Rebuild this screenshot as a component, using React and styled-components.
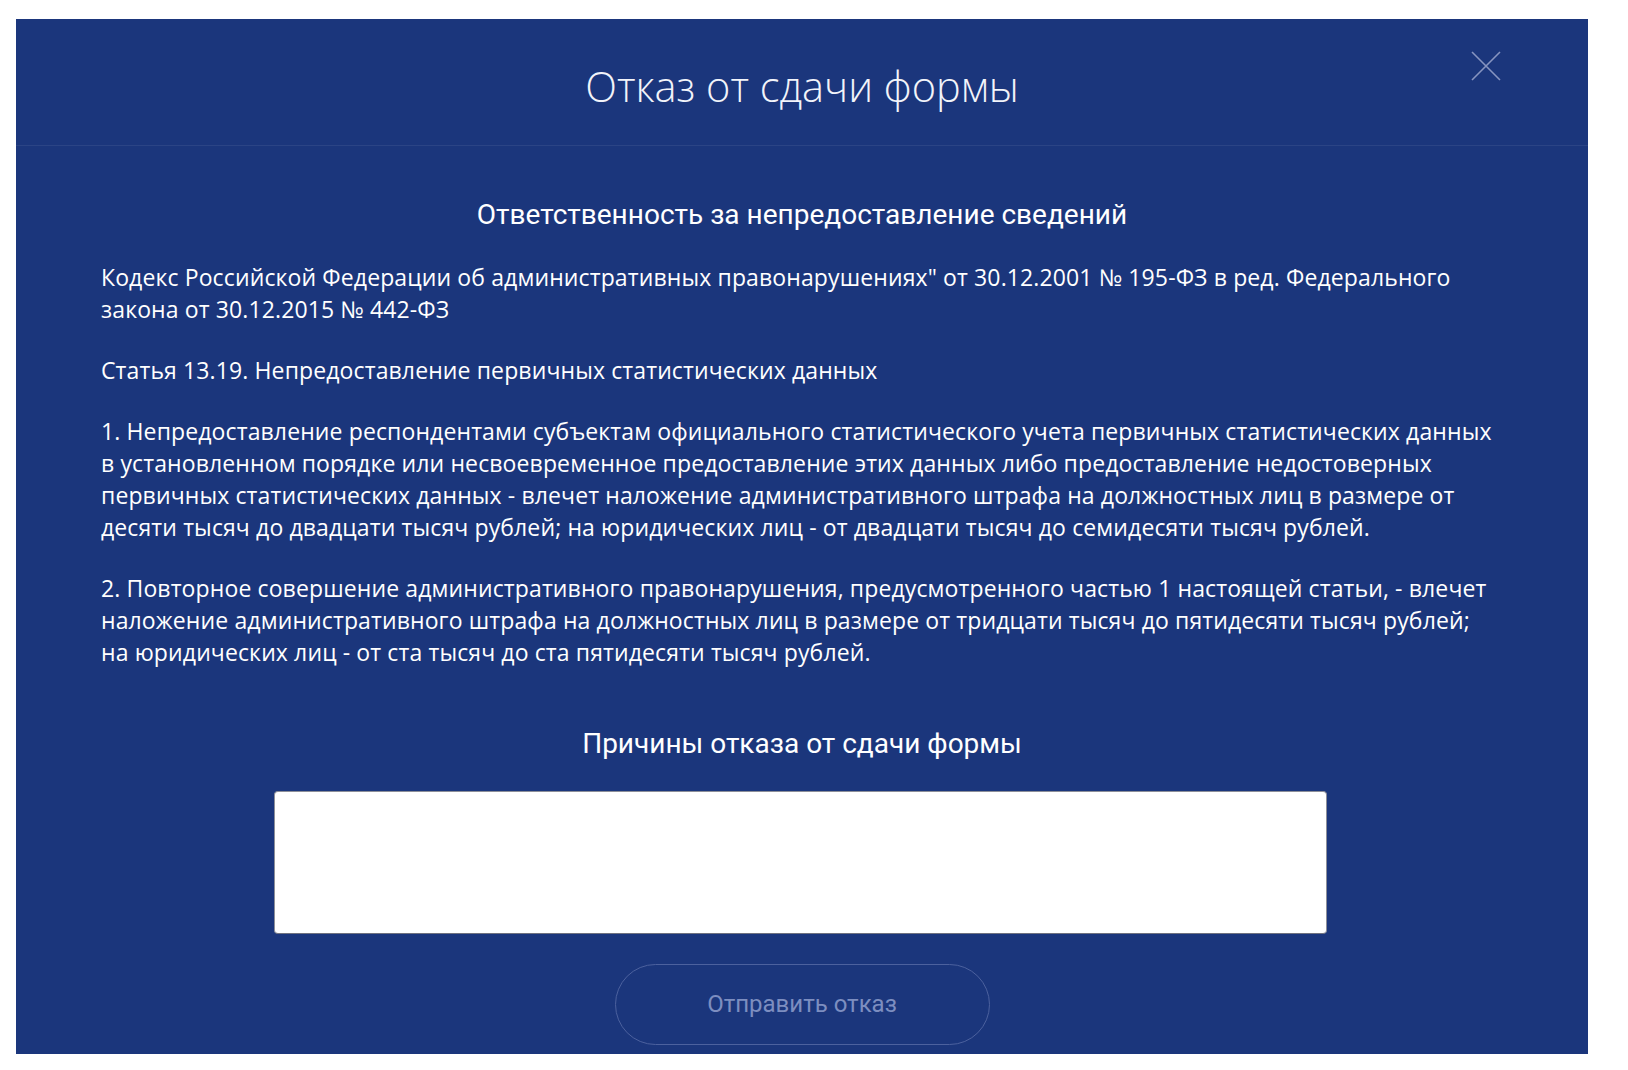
import React from 'react';
import styled, {createGlobalStyle} from 'styled-components';

const GlobalStyle = createGlobalStyle`
    body {
        margin: 0;
        background: #fff;
        font-family: "Open Sans", "Liberation Sans", sans-serif;
    }
`;

const Page = styled.div`
    padding: 19px 0 16px 16px;
`;

const Dialog = styled.div`
    width: 1572px;
    background: #1b367c;
    padding-bottom: 9px;
    color: #fff;
`;

const Header = styled.div`
    position: relative;
    height: 127px;
    box-sizing: border-box;
    padding-top: 47px;
    display: flex;
    justify-content: center;
    align-items: flex-start;
    border-bottom: 1px solid rgba(255, 255, 255, 0.07);
`;

const Title = styled.h1`
    margin: 0;
    font-family: "Open Sans", sans-serif;
    font-weight: 300;
    font-size: 41.5px;
    line-height: 41.5px;
    color: #f2f4fa;
`;

const Close = styled.button`
    position: absolute;
    top: 32px;
    right: 87px;
    width: 30px;
    height: 30px;
    padding: 0;
    border: 0;
    background: none;
    cursor: pointer;
    & svg {
        display: block;
    }
`;

const Content = styled.div`
    padding: 51px 85px 0;
    display: flex;
    flex-direction: column;
    align-items: stretch;
`;

const Heading = styled.h2`
    margin: ${({$top}) => $top || 0}px 0 0;
    font-family: Roboto, "Open Sans", sans-serif;
    font-weight: 400;
    font-size: 28px;
    line-height: 36px;
    text-align: center;
    color: #fff;
`;

const Text = styled.div`
    margin-top: 28px;
    font-size: 23px;
    letter-spacing: 0.12px;
    line-height: 32.2px;
    color: #fff;
    & p {
        margin: 0 0 28.5px;
        white-space: nowrap;
    }
    & p:last-child {
        margin-bottom: 0;
    }
`;

const Reason = styled.textarea`
    display: block;
    margin: 29px auto 0;
    width: 1053px;
    height: 143px;
    box-sizing: border-box;
    border: 1px solid #8d8f99;
    border-bottom-color: #6f7280;
    border-radius: 4px;
    background: #fff;
    resize: none;
    outline: none;
    padding: 10px 14px;
    font-family: "Open Sans", sans-serif;
    font-size: 18px;
    position: relative;
    left: -2px;
`;

const SendButton = styled.button`
    display: block;
    margin: 30px auto 0;
    width: 375px;
    height: 81px;
    border-radius: 41px;
    border: 1px solid #4c619e;
    background: transparent;
    font-family: Roboto, "Open Sans", sans-serif;
    font-size: 24px;
    color: #7d8ec0;
    cursor: default;
`;

const law = [
    ['Кодекс Российской Федерации об административных правонарушениях" от 30.12.2001 № 195-ФЗ в ред. Федерального',
        'закона от 30.12.2015 № 442-ФЗ'],
    ['Статья 13.19. Непредоставление первичных статистических данных'],
    ['1. Непредоставление респондентами субъектам официального статистического учета первичных статистических данных',
        'в установленном порядке или несвоевременное предоставление этих данных либо предоставление недостоверных',
        'первичных статистических данных - влечет наложение административного штрафа на должностных лиц в размере от',
        'десяти тысяч до двадцати тысяч рублей; на юридических лиц - от двадцати тысяч до семидесяти тысяч рублей.'],
    ['2. Повторное совершение административного правонарушения, предусмотренного частью 1 настоящей статьи, - влечет',
        'наложение административного штрафа на должностных лиц в размере от тридцати тысяч до пятидесяти тысяч рублей;',
        'на юридических лиц - от ста тысяч до ста пятидесяти тысяч рублей.'],
];

export default function App() {
    return (
        <Page>
            <GlobalStyle />
            <Dialog>
                <Header>
                    <Title>Отказ от сдачи формы</Title>
                    <Close aria-label="Закрыть">
                        <svg width="30" height="30" viewBox="0 0 30 30">
                            <path d="M1 1 L29 29 M29 1 L1 29" stroke="#8794c0" strokeWidth="1.6" fill="none" />
                        </svg>
                    </Close>
                </Header>
                <Content>
                    <Heading>Ответственность за непредоставление сведений</Heading>
                    <Text>
                        {law.map((lines, i) => (
                            <p key={i}>
                                {lines.map((line, j) => (
                                    <React.Fragment key={j}>
                                        {j > 0 && <br />}
                                        {line}
                                    </React.Fragment>
                                ))}
                            </p>
                        ))}
                    </Text>
                    <Heading $top={57}>Причины отказа от сдачи формы</Heading>
                    <Reason />
                    <SendButton>Отправить отказ</SendButton>
                </Content>
            </Dialog>
        </Page>
    );
}
